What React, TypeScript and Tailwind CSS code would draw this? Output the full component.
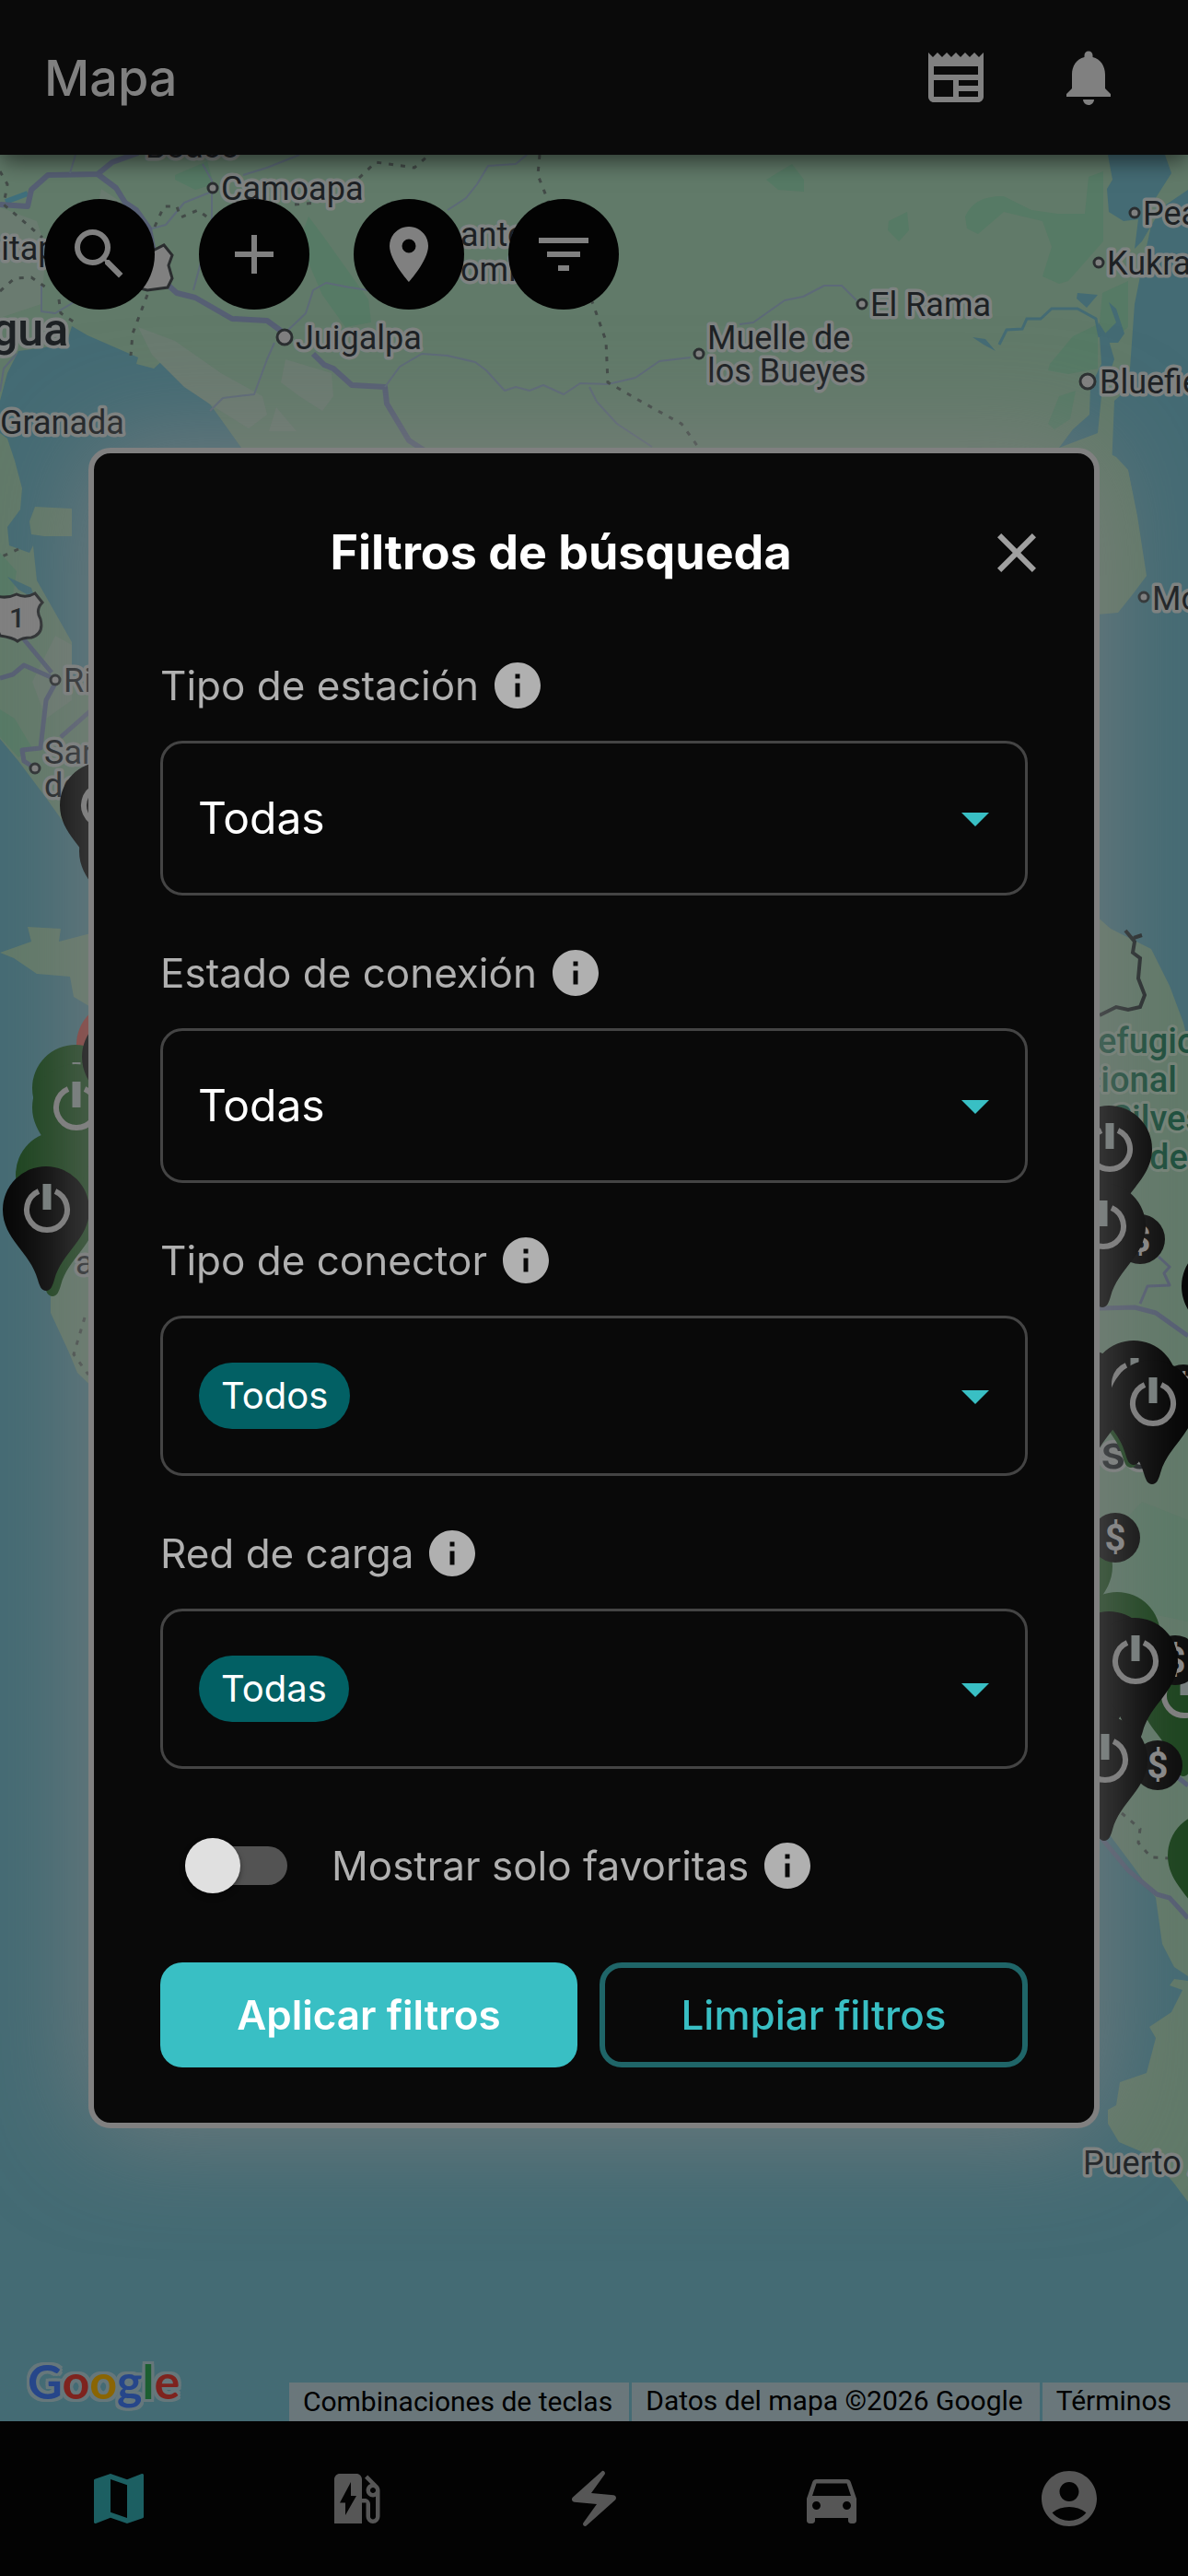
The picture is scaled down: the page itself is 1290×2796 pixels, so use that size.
import { useState } from "react"
import type { ReactNode } from "react"
import {
  MdAccountCircle,
  MdAdd,
  MdArrowDropDown,
  MdClose,
  MdDirectionsCar,
  MdElectricBolt,
  MdEvStation,
  MdFilterList,
  MdInfo,
  MdLocationOn,
  MdMap,
  MdNewspaper,
  MdNotifications,
  MdSearch,
} from "react-icons/md"

type Marker = { x: number; y: number; fill?: string; icon?: boolean; paid?: boolean }
type Town = { x: number; y: number; name: string; dot?: [number, number, number] }

const DARK = "#030303"
const GREEN = "#1b431d"

// x / y is the tip of a pin, or the centre of a "paid" badge; later ones lie on top
const markers: Marker[] = [
  { x: 133, y: 1012 },
  { x: 112, y: 962, icon: true },
  { x: 130, y: 1222, fill: "#8b3a36" },
  { x: 82, y: 1269, fill: GREEN, icon: true },
  { x: 64, y: 1363, fill: GREEN },
  { x: 82, y: 1290, fill: GREEN, icon: true },
  { x: 136, y: 1235 },
  { x: 57, y: 1407, fill: GREEN },
  { x: 50, y: 1401, icon: true },
  { x: 1204, y: 1335, icon: true },
  { x: 1238, y: 1345, paid: true },
  { x: 1197, y: 1419, icon: true },
  { x: 1330, y: 1484 },
  { x: 1228, y: 1593, fill: GREEN },
  { x: 1285, y: 1508, paid: true },
  { x: 1178, y: 1600 },
  { x: 1231, y: 1590, icon: true },
  { x: 1251, y: 1611, icon: true },
  { x: 1161, y: 1788, fill: GREEN },
  { x: 1211, y: 1669, paid: true },
  { x: 1285, y: 1928, fill: GREEN, icon: true },
  { x: 1213, y: 1863, fill: GREEN },
  { x: 1276, y: 1802, paid: true },
  { x: 1204, y: 1884 },
  { x: 1232, y: 1891, icon: true },
  { x: 1257, y: 1916, paid: true },
  { x: 1199, y: 1998, icon: true },
  { x: 1315, y: 2102, fill: GREEN, icon: true },
]

const towns: Town[] = [
  { x: 158, y: 171, name: "Boaco" },
  { x: 240, y: 217, name: "Camoapa", dot: [231, 204, 5] },
  { x: -19, y: 282, name: "pitapa" },
  { x: 500, y: 267, name: "anto" },
  { x: 500, y: 305, name: "omingo" },
  { x: 321, y: 379, name: "Juigalpa", dot: [309, 366, 8] },
  { x: 0, y: 471, name: "Granada" },
  { x: 768, y: 379, name: "Muelle de", dot: [759, 384, 5] },
  { x: 768, y: 415, name: "los Bueyes" },
  { x: 945, y: 343, name: "El Rama", dot: [936, 330, 5] },
  { x: 1241, y: 244, name: "Pearl", dot: [1232, 231, 5] },
  { x: 1202, y: 298, name: "Kukra", dot: [1193, 285, 5] },
  { x: 1194, y: 427, name: "Bluefields", dot: [1181, 414, 8] },
  { x: 1251, y: 662, name: "Moa", dot: [1242, 648, 5] },
  { x: 69, y: 751, name: "Rivas", dot: [60, 738, 5] },
  { x: 48, y: 829, name: "San", dot: [38, 834, 5] },
  { x: 48, y: 865, name: "del" },
  { x: 82, y: 1383, name: "a" },
  { x: 1176, y: 2360, name: "Puerto A" },
]

function MapMarker({ x, y, fill = DARK, icon, paid }: Marker) {
  if (paid) {
    return (
      <g transform={`translate(${x} ${y})`}>
        <circle r="27" fill="#0a0a0a" />
        <text y="14" fill="#8a8a8a" fontSize="40" fontWeight="700" textAnchor="middle">$</text>
      </g>
    )
  }
  return (
    <g transform={`translate(${x} ${y})`}>
      <path
        fill={fill}
        d="M0 0C-5 0-7-5-9-12C-17-42-47-56-47-88A47 47 0 0 1 47-88C47-56 17-42 9-12C7-5 5 0 0 0Z"
      />
      {icon && (
        <g fill="none" stroke="#808080">
          <path strokeWidth="6" d="M-8-108A22 22 0 1 0 10-108" />
          <path strokeWidth="9" stroke="#78807f" d="M1-116V-88" />
        </g>
      )}
    </g>
  )
}

function MapCanvas() {
  return (
    <svg
      className="absolute inset-0 h-full w-full font-[Roboto,sans-serif]"
      viewBox="0 168 1290 2460"
      preserveAspectRatio="xMidYMid slice"
      aria-hidden="true"
    >
      <rect y="168" width="1290" height="2460" fill="#446b74" />
      {/* land */}
      <g fill="#617a69">
        <path d="M0 168H1203L1208 195L1202 205L1204 230L1220 240L1236 238L1232 270L1240 262L1250 245L1240 290L1232 330L1227 400V420L1210 435L1207 510L1218 560L1140 560L1160 470L1183 450L1197 410V560H300L262 486L232 444L195 396L178 390L167 400L148 395L150 388L95 364L78 354L72 374L20 381L8 405L0 435Z" />
        <path d="M1265 168H1290V206L1262 225L1250 245L1244 232L1272 188Z" />
        <path d="M0 470L8 476L16 500L24 530L22 553L8 572L10 592L32 600L36 592L40 630L78 697V735L110 750V950L85 915L50 866L20 826L0 802Z" />
        <path d="M38 550L78 552V582L48 582L34 580L32 566Z" />
        <path d="M0 1034L34 1022L30 1006L66 1008L64 1022L110 1010V1100L80 1082L76 1060L40 1057L15 1040Z" />
        <path d="M55 1395L55 1425L75 1468L84 1490L110 1515V1330Z" />
        <path d="M1180 480L1212 496L1225 510L1235 560L1245 625L1230 645L1214 665L1180 668Z" />
        <path d="M1180 985L1206 1008L1250 1030L1270 1070L1285 1110L1290 1130V2145L1275 2135L1262 2110L1255 2060L1230 2025L1200 1985L1180 1970Z" />
        <path d="M1290 2390L1275 2370L1250 2340L1215 2325L1203 2305V2290L1212 2285L1216 2260L1245 2250L1255 2212L1248 2200L1272 2184L1284 2160L1270 2155L1275 2148L1290 2150Z" />
      </g>
      {/* lighter and darker vegetation */}
      <g fill="#6a7b70">
        <path d="M150 355L190 370L240 405L285 430L290 450L270 465L230 440L200 420L165 385Z" />
        <path d="M310 390L360 405L362 430L350 446L325 430L305 415Z" />
        <path d="M300 442L322 468H292Z" />
        <path d="M110 205L140 225L130 280L100 250Z" />
        <path d="M0 225L40 240L50 270L45 330L0 345Z" />
        <path d="M60 690L78 700V760L50 780L35 740Z" />
      </g>
      <g fill="#567a65">
        <path d="M190 190L225 175L232 200L212 206L190 195Z" />
        <path d="M335 235L350 255L400 325L403 350L375 355L350 320L325 262Z" />
        <path d="M832 195L860 178L873 195V208L845 206Z" />
        <path d="M965 240L985 230L987 250L976 262L964 250Z" />
        <path d="M1048 235Q1058 212 1090 213L1120 228L1148 232L1178 232L1182 192L1198 186V262L1160 305L1150 308L1132 300L1142 268L1132 240L1090 230L1062 254L1050 248Z" />
        <path d="M1197 318L1225 305V355L1205 372L1194 350Z" />
        <path d="M1140 395L1165 365L1192 352V400L1160 406L1138 402Z" />
        <path d="M1138 460L1150 430L1168 424L1162 455L1145 466Z" />
        <path d="M0 600L18 620L12 660L0 670ZM0 770L16 780L35 812L20 822L0 800Z" />
        <path d="M1194 1680L1240 1630L1290 1650V1760L1194 1740Z" opacity=".6" />
      </g>
      {/* lagoons and rivers */}
      <g fill="#446b74">
        <path d="M1170 318L1192 320L1180 334L1169 324Z" />
        <path d="M1056 366L1070 368L1081 381L1068 374Z" />
        <path d="M1204 328L1212 335L1221 362L1214 372L1203 372L1196 366L1212 350Z" />
        <path d="M1193 350L1203 366L1210 390L1203 410L1197 420L1192 470L1150 486L1165 466L1183 450L1184 420L1196 395Z" />
        <path d="M8 626L34 638L38 650L20 640Z" />
      </g>
      <path
        fill="none"
        stroke="#446b74"
        strokeWidth="3"
        d="M1085 374L1093 358L1110 357L1115 346L1130 346L1142 335L1170 335L1190 346L1194 366"
      />
      <path fill="none" stroke="#3f6f7c" strokeWidth="6" d="M6 219L30 210" />
      {/* highways */}
      <g fill="none" stroke="#565f74" strokeLinejoin="round">
        <path strokeWidth="6" d="M0 222L30 224L34 206L52 190L106 189L122 176L150 166" />
        <path strokeWidth="6" d="M106 189L126 204L136 220L148 228L162 248L172 300L192 318L212 323L252 346L290 348L309 362" />
        <path strokeWidth="6" d="M340 384L352 396L362 400L382 418L418 420L420 438L444 478L470 495" />
        <path strokeWidth="5" d="M0 736L14 732L26 722L62 738L50 760L44 812L24 814L26 826L38 834M26 694L56 730M100 770L66 800" />
        <path strokeWidth="5" d="M1194 1420L1232 1419L1255 1425L1290 1450" />
        <path strokeWidth="3" d="M1238 1415L1246 1396L1270 1395L1264 1382L1270 1375L1258 1364" />
        <path strokeWidth="5" d="M1196 1995L1225 2030L1256 2056L1270 2060L1290 2082M1270 1922L1290 1938" />
      </g>
      <g fill="none" stroke="#5d6a78" strokeWidth="2" strokeLinejoin="round">
        <path d="M76 188L82 168M220 178L230 196V240L210 315M264 190L290 182L325 168M230 208L200 220L180 244L165 248" />
        <path d="M309 362L332 340L340 315L354 307L380 312L420 318" />
        <path d="M298 372L290 390L276 428L242 432L228 446" />
        <path d="M418 420L434 398L458 384L486 386L516 393L528 402L548 424L560 420L575 424L590 418L612 428L630 416L660 417L690 410L716 392L750 388" />
        <path d="M640 420L648 436L670 460L708 485" />
        <path d="M803 352L818 350L852 326L872 322L895 310H914L930 326" />
        <path d="M486 228L506 215L518 200L530 180L560 178L572 168" />
        <path d="M45 310V338L60 340L80 328M0 425L4 400L18 384" />
      </g>
      <g fill="none" stroke="#434b48" strokeWidth="3" strokeDasharray="5 8">
        <path d="M0 186L8 200L4 222L30 244L46 258M0 316L16 302L34 301L50 312" />
        <path d="M390 193L408 176L450 182L466 168M586 168L584 190L594 215L644 330L658 370L660 415L700 438L740 460L758 485" />
        <path d="M168 246L178 224L192 224L196 236L215 228L228 238M320 222L345 220" />
        <path d="M160 320L144 362L142 386M64 325L66 340L84 352" />
        <path d="M1218 1968L1238 1985L1236 2000L1250 2016L1270 2017" />
        <path d="M20 596L2 604M92 1430L80 1470L96 1492" />
      </g>
      <path
        fill="none"
        stroke="#23292a"
        strokeWidth="4"
        d="M1222 1010L1232 1022L1230 1034L1238 1040L1236 1062L1243 1080L1238 1093L1225 1096L1212 1093L1194 1102M1231 1018L1240 1015"
      />
      {/* road shields */}
      <g fill="#808080" stroke="#2a2d2f" strokeWidth="3">
        <path d="M150 270L166 272L178 266L187 277L183 288L187 302L182 312L160 315L140 310Z" />
        <path d="M-4 647Q8 650 18 645Q28 650 38 644L46 654Q38 662 44 672Q48 688 34 692Q24 692 19 696Q14 692 0 690L-8 670Z" />
      </g>
      <text x="10" y="681" fill="#22262a" fontSize="30" fontWeight="500">1</text>
      <g fill="#1d2124" stroke="#7f8382" strokeWidth="7" paintOrder="stroke" strokeLinejoin="round" fontSize="36">
        {towns.map(t => (
          <text key={t.name} x={t.x} y={t.y}>{t.name}</text>
        ))}
        <text x="-9" y="375" fontSize="50" fontWeight="500">gua</text>
        <text x="1166" y="1594" fontSize="52" fontWeight="500">osé</text>
      </g>
      <g fill="#808080" stroke="#2a2e30" strokeWidth="3">
        {towns.map(t => t.dot && <circle key={t.name} cx={t.dot[0]} cy={t.dot[1]} r={t.dot[2]} />)}
      </g>
      <g fill="#1c4f3c" stroke="#758478" strokeWidth="6" paintOrder="stroke" strokeLinejoin="round" fontSize="38" fontWeight="500">
        <text x="1168" y="1143">Refugio</text>
        <text x="1128" y="1185">Nacional</text>
        <text x="1206" y="1227">Silvestre</text>
        <text x="1248" y="1269">de</text>
      </g>
      {markers.map(m => (
        <MapMarker key={`${m.x}-${m.y}`} {...m} />
      ))}
    </svg>
  )
}

const tools = [
  { label: "Buscar", Icon: MdSearch },
  { label: "Agregar", Icon: MdAdd },
  { label: "Mi ubicación", Icon: MdLocationOn },
  { label: "Filtrar", Icon: MdFilterList },
]

const tabs = [
  { label: "Mapa", Icon: MdMap, active: true },
  { label: "Estaciones", Icon: MdEvStation },
  { label: "Cargas", Icon: MdElectricBolt },
  { label: "Vehículos", Icon: MdDirectionsCar },
  { label: "Perfil", Icon: MdAccountCircle },
]

function InfoButton({ about }: { about: string }) {
  return (
    <button type="button" aria-label={`Información: ${about}`} className="text-[#b0b0b0]">
      <MdInfo className="size-[60px]" />
    </button>
  )
}

function Field({ id, label, children }: { id: string; label: string; children: ReactNode }) {
  return (
    <div className="flex flex-col gap-[30px]">
      <div className="flex h-[60px] items-center gap-3">
        <label id={`${id}-label`} htmlFor={id} className="text-[44px] leading-[60px] text-[#b0b0b0]">
          {label}
        </label>
        <InfoButton about={label} />
      </div>
      {children}
    </div>
  )
}

function SelectField({ id, label }: { id: string; label: string }) {
  return (
    <Field id={id} label={label}>
      <div className="relative">
        <select
          id={id}
          className="block h-[168px] w-full appearance-none rounded-3xl border-3 border-[#444] bg-transparent px-[38px] text-[48px] text-white"
        >
          <option>Todas</option>
        </select>
        <MdArrowDropDown className="pointer-events-none absolute inset-y-0 right-[21px] my-auto size-[72px] text-[#39bfc4]" />
      </div>
    </Field>
  )
}

function ChipField({ id, label, value }: { id: string; label: string; value: string }) {
  return (
    <Field id={id} label={label}>
      <button
        id={id}
        type="button"
        aria-haspopup="listbox"
        aria-labelledby={`${id}-label`}
        className="flex h-[174px] w-full items-center justify-between rounded-3xl border-3 border-[#444] pr-[18px] pl-[39px]"
      >
        <span className="flex h-[72px] items-center rounded-full bg-[#026064] px-6 text-[40px] text-white">{value}</span>
        <MdArrowDropDown className="size-[72px] text-[#39bfc4]" />
      </button>
    </Field>
  )
}

function FilterDialog() {
  const [onlyFavorites, setOnlyFavorites] = useState(false)

  return (
    <div className="fixed inset-0 flex items-center justify-center px-24">
      <form
        role="dialog"
        aria-labelledby="dialog-title"
        onSubmit={e => e.preventDefault()}
        className="w-full rounded-3xl border-6 border-[#808080] bg-[#090909] px-[72px] pt-[72px] pb-[60px] shadow-[0_0_120px_rgba(128,128,128,0.8)]"
      >
        <div className="-mx-6 mb-[78px] flex items-center">
          <h2 id="dialog-title" className="flex-1 text-center text-[52px] leading-[72px] font-bold text-white">
            Filtros de búsqueda
          </h2>
          <button type="button" aria-label="Cerrar" className="text-[#a0a0a0]">
            <MdClose className="size-[72px]" />
          </button>
        </div>

        <div className="flex flex-col gap-[54px]">
          <SelectField id="station-type" label="Tipo de estación" />
          <SelectField id="connection" label="Estado de conexión" />
          <ChipField id="connector" label="Tipo de conector" value="Todos" />
          <ChipField id="network" label="Red de carga" value="Todas" />
        </div>

        <div className="my-[75px] flex h-[60px] items-center gap-3 pl-[27px]">
          <label className="flex items-center gap-12 text-[44px] leading-[60px] text-[#b0b0b0]">
            <input
              type="checkbox"
              role="switch"
              checked={onlyFavorites}
              onChange={e => setOnlyFavorites(e.target.checked)}
              className="peer sr-only"
            />
            <span className="flex h-[42px] w-[111px] items-center rounded-full bg-[#535353] peer-checked:justify-end">
              <span className="size-[60px] shrink-0 rounded-full bg-[#e0e0e0] shadow-[0_3px_6px_rgba(0,0,0,0.4)]" />
            </span>
            Mostrar solo favoritas
          </label>
          <InfoButton about="Mostrar solo favoritas" />
        </div>

        <div className="flex gap-6">
          <button type="submit" className="h-[114px] flex-1 rounded-3xl bg-[#39bfc4] text-[44px] font-semibold text-white">
            Aplicar filtros
          </button>
          <button
            type="reset"
            className="h-[114px] flex-1 rounded-3xl border-6 border-[#1f6568] text-[44px] font-medium text-[#39bfc4]"
          >
            Limpiar filtros
          </button>
        </div>
      </form>
    </div>
  )
}

export default function App() {
  return (
    <div className="flex min-h-screen flex-col bg-black font-[Inter,sans-serif]">
      <header className="relative z-10 flex h-[168px] items-center justify-between bg-[#0a0a0a] pr-[72px] pl-12 shadow-[0_6px_24px_rgba(0,0,0,0.6)]">
        <h1 className="text-[54px] font-medium text-[#808080]">Mapa</h1>
        <div className="flex gap-[72px] text-[#808080]">
          <button type="button" aria-label="Noticias">
            <MdNewspaper className="size-[72px]" />
          </button>
          <button type="button" aria-label="Notificaciones">
            <MdNotifications className="size-[72px]" />
          </button>
        </div>
      </header>

      <main className="relative flex flex-1 flex-col justify-between overflow-hidden">
        <MapCanvas />
        <div className="relative flex gap-12 p-12">
          {tools.map(({ label, Icon }) => (
            <button
              key={label}
              type="button"
              aria-label={label}
              className="flex size-[120px] items-center justify-center rounded-full bg-[#030303] text-[#808080]"
            >
              <Icon className="size-[72px]" />
            </button>
          ))}
        </div>
        <div className="relative flex items-end justify-between font-[Roboto,sans-serif]">
          <a
            href="#google"
            className="mb-2 ml-[30px] font-[Lato,sans-serif] text-[52px] leading-[72px] font-bold [filter:drop-shadow(3px_0_0_#66777b)_drop-shadow(-3px_0_0_#66777b)_drop-shadow(0_3px_0_#66777b)_drop-shadow(0_-3px_0_#66777b)]"
          >
            <span className="text-[#26468a]">G</span>
            <span className="text-[#7e231e]">o</span>
            <span className="text-[#8a6503]">o</span>
            <span className="text-[#26468a]">g</span>
            <span className="text-[#1b5e30]">l</span>
            <span className="text-[#7e231e]">e</span>
          </a>
          <div className="flex h-[42px] gap-[3px] text-[30px] leading-[40px] whitespace-nowrap text-black">
            <button type="button" className="bg-[#6a777b] pr-[18px] pl-[15px]">Combinaciones de teclas</button>
            <span className="bg-[#6a777b] pr-[18px] pl-[15px]">Datos del mapa ©2026 Google</span>
            <a href="#terminos" className="bg-[#6a777b] pr-[18px] pl-[15px]">Términos</a>
          </div>
        </div>
      </main>

      <nav className="flex h-[168px] bg-[#030303]">
        {tabs.map(({ label, Icon, active }) => (
          <a
            key={label}
            href={`#${label.toLowerCase()}`}
            aria-label={label}
            className={`flex flex-1 items-center justify-center ${active ? "text-[#1c5f62]" : "text-[#565656]"}`}
          >
            <Icon className="size-[72px]" />
          </a>
        ))}
      </nav>

      <FilterDialog />
    </div>
  )
}
